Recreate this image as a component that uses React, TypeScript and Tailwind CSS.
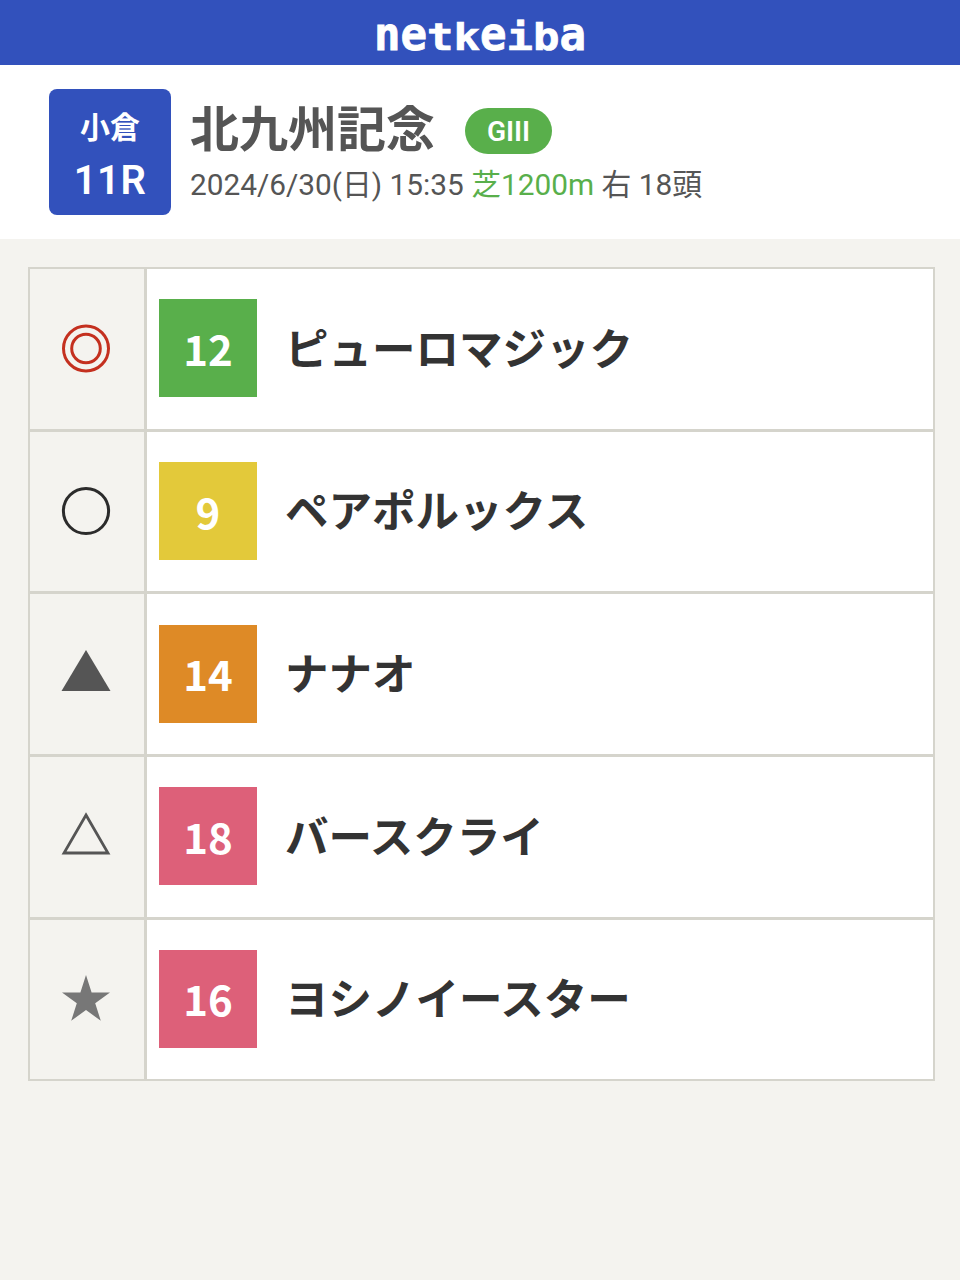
const font = { fontFamily: '"Roboto", "Noto Sans CJK JP", sans-serif' };

type Pick = { mark: "double" | "circle" | "fill" | "tri" | "star"; num: number; color: string; name: string };

const picks: Pick[] = [
  { mark: "double", num: 12, color: "bg-[#59af4b]", name: "ピューロマジック" },
  { mark: "circle", num: 9, color: "bg-[#e3c93a]", name: "ペアポルックス" },
  { mark: "fill", num: 14, color: "bg-[#de8a26]", name: "ナナオ" },
  { mark: "tri", num: 18, color: "bg-[#dd6079]", name: "バースクライ" },
  { mark: "star", num: 16, color: "bg-[#dd6079]", name: "ヨシノイースター" },
];

function Mark({ type }: { type: Pick["mark"] }) {
  return (
    <svg width="50" height="50" viewBox="0 0 50 50" fill="none">
      {type === "double" && (
        <g stroke="#c4301f" strokeWidth="3">
          <circle cx="25" cy="24.5" r="22.5" />
          <circle cx="25" cy="24.5" r="14.3" />
        </g>
      )}
      {type === "circle" && <circle cx="25" cy="25" r="22.6" stroke="#2b2b2b" strokeWidth="3" />}
      {type === "fill" && <path d="M25 1 L49.5 42 H0.5 Z" fill="#555555" />}
      {type === "tri" && <path d="M25 3 L47 41 H3 Z" stroke="#555555" strokeWidth="2.8" />}
      {type === "star" && (
        <path d="M25 1 L30.6 18.4 L49 18.4 L34.2 29.3 L39.8 46.8 L25 36 L10.2 46.8 L15.8 29.3 L1 18.4 L19.4 18.4 Z" fill="#777777" />
      )}
    </svg>
  );
}

function Logo() {
  return (
    <div className="flex font-['DejaVu_Sans_Mono'] text-[44px] leading-none font-bold text-white [-webkit-text-stroke:0.8px_white]">
      <span className="inline-block origin-[50%_85%] scale-y-[1.06]">n</span>
      <span className="inline-block origin-[50%_85%] scale-y-[1.06]">e</span>
      <span className="inline-block origin-[50%_85%] scale-y-[0.84]">t</span>
      <span className="inline-block origin-[50%_85%] scale-y-[0.84]">k</span>
      <span className="inline-block origin-[50%_85%] scale-y-[1.06]">e</span>
      <span className="inline-block origin-[50%_85%] scale-y-[0.84]">i</span>
      <span className="inline-block origin-[50%_85%] scale-y-[0.84]">b</span>
      <span className="inline-block origin-[50%_85%] scale-y-[1.06]">a</span>
    </div>
  );
}

export default function App() {
  return (
    <div className="min-h-[1280px] bg-[#f4f3ef]" style={font}>
      <header className="flex h-[65px] items-center justify-center overflow-hidden bg-[#3251bc] pt-1">
        <Logo />
      </header>

      <section className="flex h-[174px] items-start gap-[19px] bg-white pt-6 pl-[49px]">
        <div className="flex h-[126px] w-[122px] flex-col items-center rounded-lg bg-[#3251bc] pt-5 text-white">
          <div className="text-[30px] leading-[38px] font-bold">小倉</div>
          <div className="mt-[11px] text-[40px] leading-[46px] font-semibold tracking-[0.5px]">11R</div>
        </div>
        <div>
          <div className="flex h-[76px] items-center pt-[7px]">
            <h1 className="text-[49px] leading-none font-bold text-[#555555]">北九州記念</h1>
            <span className="ml-[30px] flex h-[46px] w-[87px] items-center justify-center rounded-full bg-[#59af4b] pt-[2px] text-[28px] font-semibold text-white">
              GIII
            </span>
          </div>
          <div className="text-[29.8px] leading-10 text-[#555555]">
            2024/6/30(日) 15:35 <span className="text-[#59af4b]">芝1200m</span> 右 18頭
          </div>
        </div>
      </section>

      <div className="mt-7 ml-7 w-[907px] border-t-2 border-[#d5d4cc]">
        {picks.map((p) => (
          <div
            key={p.num}
            className="flex h-[162.67px] border-b-[3px] border-[#d5d4cc] bg-white last:h-[161.5px] last:border-b-2"
          >
            <div className="flex w-[118px] shrink-0 items-center justify-center border-x-2 border-[#d5d4cc] bg-[#f4f3ef] pr-[2px]">
              <Mark type={p.mark} />
            </div>
            <div className="flex flex-1 items-center border-r-2 border-l border-[#d5d4cc] pl-3">
              <div
                className={`mb-[0.8px] flex h-[98px] w-[98px] shrink-0 items-center justify-center pb-[2px] font-['Noto_Sans_CJK_JP'] text-[42px] font-bold text-white ${p.color}`}
              >
                {p.num}
              </div>
              <div className="mt-[3px] ml-7 text-[43.5px] font-bold text-[#333333]">{p.name}</div>
            </div>
          </div>
        ))}
      </div>
    </div>
  );
}
